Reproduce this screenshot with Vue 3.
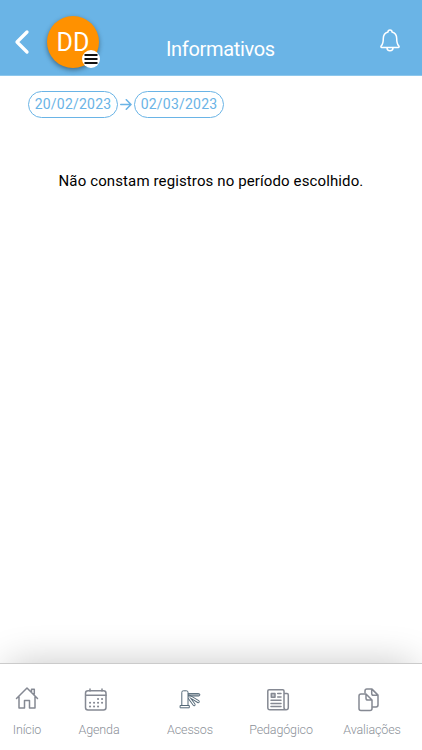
<template>
  <div class="app-page">
    <header class="app-header">
      <button class="back" aria-label="Voltar">
        <svg width="16" height="26" viewBox="0 0 16 26">
          <path d="M13 3L3 13l10 10" />
        </svg>
      </button>
      <div class="avatar">
        <span>DD</span>
        <div class="avatar-menu">
          <svg width="18" height="18" viewBox="0 0 18 18">
            <path d="M2.5 5h13M2.5 9h13M2.5 13h13" />
          </svg>
        </div>
      </div>
      <h1>Informativos</h1>
      <button class="bell" aria-label="Notificações">
        <svg width="20" height="24" viewBox="0 0 20 24">
          <path d="M8 3a2 2 0 0 1 4 0c3.2 1 4.7 3.5 4.7 6.5 0 4 .6 6 2.1 7.4.5.6.3 1.600-.6 1.600H1.800c-.9 0-1.100-1-.6-1.600C2.700 15.500 3.300 13.500 3.300 9.500 3.300 6.500 4.800 4 8 3z" />
          <path d="M7 18.700a3 3 0 0 0 6 0" />
        </svg>
      </button>
    </header>

    <main>
      <div class="period">
        <button class="date">{{ startDate }}</button>
        <svg class="arrow" width="12" height="12" viewBox="0 0 12 12">
          <path d="M.8 5.500h10.200M6.300.8L11 5.500l-4.700 4.700" />
        </svg>
        <button class="date">{{ endDate }}</button>
      </div>
      <p class="empty">Não constam registros no período escolhido.</p>
    </main>

    <nav class="tab-bar">
      <div v-for="tab in tabs" :key="tab.id" :class="['tab', tab.id]">
        <svg v-if="tab.id === 'home'" width="24" height="24" viewBox="0 0 24 24">
          <path d="M1.500 12.500L12 2l10.500 10.500M4 11v11h5.500v-7.500h5V22H20V11M16.500 5.500V3.300h2.800v5" />
        </svg>
        <svg v-else-if="tab.id === 'agenda'" width="24" height="24" viewBox="0 0 24 24">
          <rect x="1.500" y="2.700" width="20.500" height="19.300" rx="2.500" />
          <path d="M2 7.300h20M6 1v2M18 1v2" />
          <path class="dots" d="M14 11h.1M18 11h.1M6 14.700h.1M10 14.700h.1M14 14.700h.1M18 14.700h.1M6 18.500h.1M10 18.500h.1M14 18.500h.1" />
        </svg>
        <svg v-else-if="tab.id === 'access'" width="24" height="24" viewBox="0 0 24 24">
          <path class="arm" d="M10.500 9l5.600 7.700M11 8l9.200 5.600" />
          <path class="arm-inner" d="M10.500 9l5.600 7.700M11 8l9.200 5.600" />
          <path class="fill" d="M10.500 5.600h10.300q1 0 1 1.200t-1 1.200H10.500z" />
          <path class="post" d="M3.800 17.500V4.300Q3.800 2.800 5.300 2.800h3.200q1.500 0 1.500 1.500v13.200M2.500 17.500h8.800v2.300H2.500z" />
        </svg>
        <svg v-else-if="tab.id === 'learning'" width="24" height="24" viewBox="0 0 24 24">
          <path d="M18 5.500h3q1.300 0 1.300 1.500v12.500q0 2.300-2.200 2.300H4q-2.200 0-2.200-2.300V3q0-1.300 1.300-1.300h13.600Q18 1.700 18 3v16.500q0 2.300 2.200 2.300" />
          <rect class="fill" x="5.300" y="5.500" width="3.700" height="3.700" />
          <path d="M11.700 5.500H15M11.700 8.900H15M5 12.300h10M5 15.400h10M5 18.500h10" />
        </svg>
        <svg v-else width="24" height="24" viewBox="0 0 24 24">
          <path d="M8 4.800V3q0-1.900 1.900-1.900H15l6 6V17q0 1.900-1.900 1.900h-3.600M14.700 1.100v4.400q0 1.800 1.800 1.800H21" />
          <path d="M4 6h5l6 6v8.500q0 2-2 2H4q-2 0-2-2V8q0-2 2-2zM9 6v4.200Q9 12 10.800 12H15" />
        </svg>
        <span class="label">{{ tab.label }}</span>
      </div>
    </nav>
  </div>
</template>

<script setup>
const startDate = '20/02/2023'
const endDate = '02/03/2023'

const tabs = [
  { id: 'home', label: 'Início' },
  { id: 'agenda', label: 'Agenda' },
  { id: 'access', label: 'Acessos' },
  { id: 'learning', label: 'Pedagógico' },
  { id: 'reviews', label: 'Avaliações' }
]
</script>

<style>
body {
  margin: 0;
}
</style>

<style scoped>
.app-page {
  display: flex;
  flex-direction: column;
  height: 100vh;
  overflow: hidden;
  background: #fff;
  font-family: Roboto, "Liberation Sans", sans-serif;
}

button {
  margin: 0;
  padding: 0;
  border: 0;
  background: none;
  font: inherit;
}

svg {
  display: block;
  fill: none;
  stroke: currentColor;
  stroke-linecap: round;
  stroke-linejoin: round;
}

.app-header {
  display: grid;
  grid-template-columns: 33px 52px 1fr 20px;
  column-gap: 14px;
  box-sizing: border-box;
  height: 76px;
  padding: 16px 22px 0 0;
  border-bottom: 1px solid #8dc7ec;
  background: #6ab4e6;
  color: #fff;
}

.back {
  height: 26px;
  padding: 13px 0 0 14px;
  color: #fff;
}

.back svg {
  stroke-width: 3.3;
}

.avatar {
  position: relative;
  width: 52px;
  height: 52px;
  border-radius: 50%;
  background: #ff9100;
  box-shadow: 0 2px 5px rgba(0, 0, 0, 0.4);
  font-size: 25px;
  line-height: 54px;
  text-align: center;
}

.avatar-menu {
  position: absolute;
  right: -1px;
  bottom: 0;
  width: 18px;
  height: 18px;
  border-radius: 50%;
  background: #fff;
  color: #111;
}

.avatar-menu svg {
  stroke-width: 1.8;
  stroke-linecap: butt;
}

h1 {
  margin: 20px 0 0 53px;
  font-size: 20px;
  font-weight: 400;
  letter-spacing: -0.33px;
  line-height: 26px;
}

.bell {
  height: 24px;
  margin-top: 13px;
  color: #fff;
}

.bell svg {
  stroke-width: 1.5;
}

main {
  flex: 1;
}

.period {
  display: flex;
  align-items: center;
  gap: 2px;
  padding: 15px 28px 0;
  color: #6ab4e6;
}

.date {
  box-sizing: border-box;
  width: 90px;
  height: 27px;
  border: 1px solid #6ab4e6;
  border-radius: 14px;
  color: #6ab4e6;
  font-size: 14px;
  letter-spacing: 0.22px;
  line-height: 25px;
}

.arrow {
  stroke-width: 1.6;
}

.empty {
  margin: 53px 0 0;
  color: #000;
  font-size: 15px;
  letter-spacing: 0.12px;
  line-height: 20px;
  text-align: center;
}

.tab-bar {
  display: grid;
  grid-template-columns: 54px 90px 92px 90px 92px;
  box-sizing: border-box;
  height: 87px;
  border-top: 1px solid #cbcbcb;
  background: #fff;
  box-shadow: 0 -7px 38px -8px rgba(0, 0, 0, 0.23);
}

.tab {
  display: flex;
  flex-direction: column;
  align-items: center;
  padding-top: 24px;
  color: #858993;
}

.tab svg {
  stroke-width: 1.5;
}

.home svg {
  margin-top: -2px;
  margin-bottom: 2px;
}

.agenda svg,
.learning svg,
.reviews svg {
  margin-right: 7px;
}

.tab.access {
  color: #566a79;
}

.tab.access svg {
  stroke-width: 1;
}

.arm {
  stroke-width: 3;
}

.arm-inner {
  stroke: #fff;
  stroke-width: 1.2;
}

.post {
  fill: #fff;
}

.tab .dots {
  stroke-width: 2;
}

.fill {
  fill: currentColor;
  fill-opacity: 0.5;
}

.label {
  margin-top: 9px;
  color: #8b9098;
  font-size: 12.5px;
  font-weight: 300;
  letter-spacing: -0.13px;
  line-height: 18px;
}
</style>
